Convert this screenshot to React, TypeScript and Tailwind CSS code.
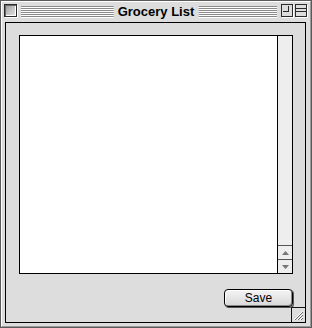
import React from "react";

const Stripes = () => (
  <div className="flex-1 h-[12px] mt-[2px] bg-[repeating-linear-gradient(to_bottom,#8a8a8a_0px,#8a8a8a_1px,#ffffff_1px,#ffffff_2px)]" />
);

const GrowBox = () => (
  <div className="absolute right-0 bottom-0 w-[14px] h-[15px] border-t border-l border-[#111] bg-[#dddddd]">
    <svg width="13" height="14" viewBox="0 0 13 14" className="block">
      <path d="M2 12 L11 3" stroke="#ffffff" strokeWidth="1" />
      <path d="M3 12 L11 4" stroke="#666666" strokeWidth="1" />
      <path d="M5 12 L11 6" stroke="#ffffff" strokeWidth="1" />
      <path d="M6 12 L11 7" stroke="#666666" strokeWidth="1" />
      <path d="M8 12 L11 9" stroke="#ffffff" strokeWidth="1" />
      <path d="M9 12 L11 10" stroke="#666666" strokeWidth="1" />
    </svg>
  </div>
);

const App = () => {
  return (
    <div className="w-[312px] h-[328px] border border-[#5a5a5a] bg-[#dddddd] font-['Liberation_Sans',Arial,sans-serif]">
      <div className="w-full h-full border-t border-l border-white border-r border-b border-r-[#9a9a9a] border-b-[#9a9a9a] flex flex-col">
        {/* Title bar */}
        <div className="relative h-[20px] flex items-start pt-[2px] pl-[2px] pr-[3px]">
          <div className="relative w-[13px] h-[13px] border border-[#2a2a2a] bg-[linear-gradient(135deg,#9a9a9a,#e8e8e8)] shadow-[1px_1px_0_#ffffff] flex-none">
            <div className="absolute inset-0 shadow-[inset_1px_1px_0_#666,inset_-1px_-1px_0_#fff]" />
          </div>
          <div className="w-[4px]" />
          <Stripes />
          <div className="w-[4px]" />
          <div className="relative w-[12px] h-[13px] border border-[#2a2a2a] bg-[#dddddd] flex-none shadow-[1px_1px_0_#ffffff]">
            <div className="absolute left-[1px] top-[1px] w-[6px] h-[6px] border-r border-b border-[#2a2a2a]" />
          </div>
          <div className="w-[2px]" />
          <div className="relative w-[12px] h-[13px] border border-[#2a2a2a] bg-[#dddddd] flex-none shadow-[1px_1px_0_#ffffff]">
            <div className="absolute left-0 right-0 top-[3px] h-[4px] border-t border-b border-[#2a2a2a]" />
          </div>
          {/* centred title over the stripes */}
          <div className="absolute left-1/2 top-[2px] -translate-x-1/2 px-[4px] bg-[#dddddd] text-[13px] font-bold leading-[15px] text-black whitespace-nowrap">
            Grocery List
          </div>
        </div>

        {/* Content */}
        <div className="relative flex-1 ml-[3px] mr-[4px] mb-[3px] border border-black bg-[#dddddd] pl-[13px] pt-[12px]">
          <div className="flex w-[274px] h-[239px] border border-black">
            <div className="flex-1 bg-white" />
            <div className="w-[15px] border-l border-black bg-[#eeeeee] flex flex-col justify-end">
              <div className="h-[14px] border-t border-[#555] flex items-center justify-center">
                <svg width="7" height="4" viewBox="0 0 7 4">
                  <path d="M3.5 0 L7 4 L0 4 Z" fill="#777" />
                </svg>
              </div>
              <div className="h-[14px] border-t border-[#555] flex items-center justify-center">
                <svg width="7" height="4" viewBox="0 0 7 4">
                  <path d="M0 0 L7 0 L3.5 4 Z" fill="#777" />
                </svg>
              </div>
            </div>
          </div>
          <div className="flex justify-end w-[274px] mt-[15px]">
            <button className="w-[69px] h-[18px] rounded-[4px] border border-black bg-[linear-gradient(to_bottom,#f4f4f4,#d8d8d8)] shadow-[inset_1px_1px_0_#ffffff,inset_-1px_-1px_0_#8a8a8a,1px_1px_0_#555] text-[12px] leading-[16px] text-black">
              Save
            </button>
          </div>
          <GrowBox />
        </div>
      </div>
    </div>
  );
};

export default App;
